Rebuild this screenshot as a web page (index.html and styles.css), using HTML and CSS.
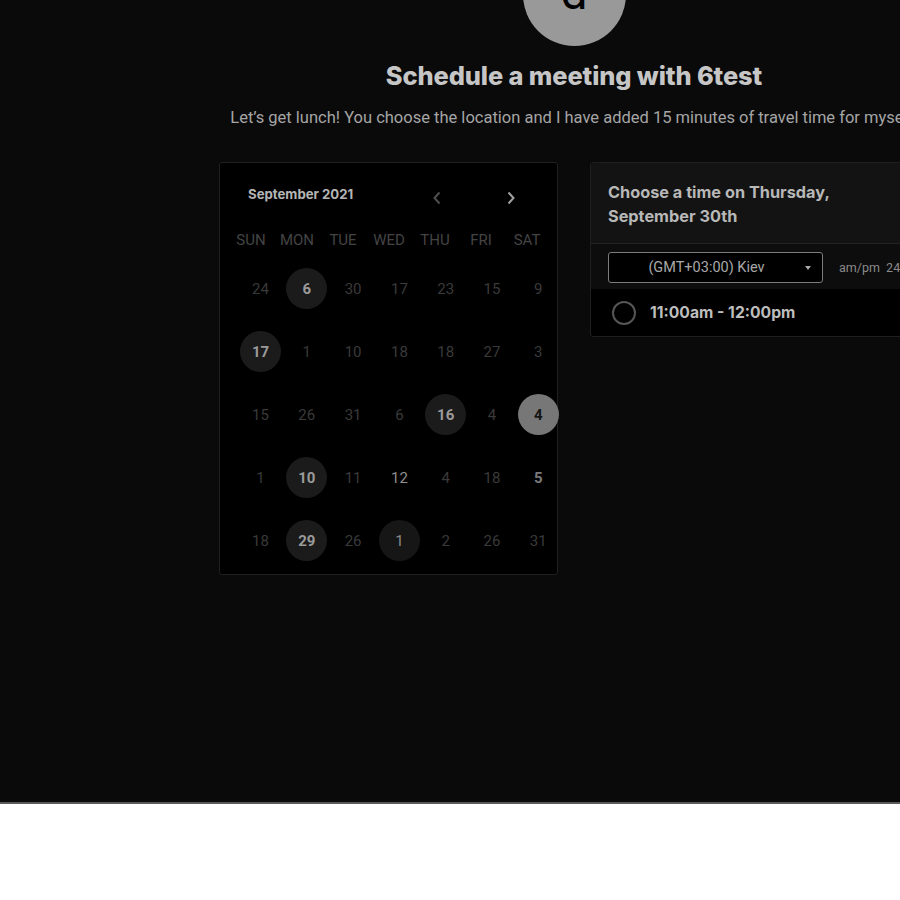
FILE: index.html
```html
<!DOCTYPE html>
<html lang="en">
<head>
<meta charset="utf-8">
<title>Schedule a meeting</title>
<link rel="stylesheet" href="styles.css">
</head>
<body>
<div class="overlay">
  <div class="page">
    <div class="avatar"><span>d</span></div>
    <h1 class="title">Schedule a meeting with 6test</h1>
    <p class="subtitle">Let’s get lunch! You choose the location and I have added 15 minutes of travel time for myself.</p>
    <div class="cards">
      <div class="calendar">
        <div class="cal-head">
          <span class="month">September 2021</span>
          <span class="nav prev"><svg width="10" height="14" viewBox="0 0 10 14"><path d="M7.5 1.5 L2.5 7 L7.5 12.5" fill="none" stroke="currentColor" stroke-width="2"/></svg></span>
          <span class="nav next"><svg width="10" height="14" viewBox="0 0 10 14"><path d="M2.5 1.5 L7.5 7 L2.5 12.5" fill="none" stroke="currentColor" stroke-width="2"/></svg></span>
        </div>
        <div class="weekdays">
          <span>SUN</span><span>MON</span><span>TUE</span><span>WED</span><span>THU</span><span>FRI</span><span>SAT</span>
        </div>
        <div class="days">
          <span class="d">24</span><span class="d av">6</span><span class="d">30</span><span class="d">17</span><span class="d">23</span><span class="d">15</span><span class="d">9</span>
          <span class="d av">17</span><span class="d">1</span><span class="d">10</span><span class="d">18</span><span class="d">18</span><span class="d">27</span><span class="d">3</span>
          <span class="d">15</span><span class="d">26</span><span class="d">31</span><span class="d">6</span><span class="d av">16</span><span class="d">4</span><span class="d sel">4</span>
          <span class="d">1</span><span class="d av">10</span><span class="d">11</span><span class="d lit">12</span><span class="d">4</span><span class="d">18</span><span class="d lit b">5</span>
          <span class="d">18</span><span class="d av">29</span><span class="d">26</span><span class="d av dim">1</span><span class="d">2</span><span class="d">26</span><span class="d">31</span>
        </div>
      </div>
      <div class="times">
        <div class="times-head">Choose a time on Thursday,<br>September 30th</div>
        <div class="tz-row">
          <div class="tz-select"><span>(GMT+03:00) Kiev</span><span class="caret"></span></div>
          <span class="fmt">am/pm&nbsp; 24h</span>
        </div>
        <div class="slot">
          <span class="radio"></span>
          <span class="slot-text">11:00am - 12:00pm</span>
        </div>
      </div>
    </div>
  </div>
</div>
</body>
</html>
```
FILE: styles.css
```css
html, body {
  margin: 0;
  padding: 0;
  background: #ffffff;
  overflow: hidden;
}
.overlay {
  height: 802px;
  background: #0a0a0a;
  border-bottom: 2px solid #5a5a5a;
  overflow: hidden;
}
.page {
  width: 1148px;
  display: flex;
  flex-direction: column;
  align-items: center;
}
.avatar {
  width: 103px;
  height: 103px;
  border-radius: 50%;
  background: #999999;
  margin-top: -57px;
  display: flex;
  align-items: center;
  justify-content: center;
}
.avatar span {
  font-family: Roboto, sans-serif;
  font-size: 48px;
  color: #000;
  line-height: 1;
  margin-top: -4px;
}
.title {
  margin: 15px 0 0;
  font-family: Inter, sans-serif;
  font-weight: 800;
  font-size: 25.4px;
  line-height: 30px;
  color: #c6c6c6;
  letter-spacing: -0.1px;
}
.subtitle {
  margin: 16px 0 0;
  font-family: Roboto, sans-serif;
  font-size: 16.5px;
  line-height: 22px;
  color: #a5a5a5;
  white-space: nowrap;
}
.cards {
  display: flex;
  gap: 32px;
  margin-top: 33px;
  align-items: flex-start;
}
.calendar {
  width: 337px;
  height: 411px;
  background: #000;
  border: 1px solid #1f1f1f;
  border-radius: 3px;
}
.cal-head {
  height: 62px;
  display: flex;
  align-items: center;
  padding-left: 28px;
}
.month {
  font-family: Inter, sans-serif;
  font-weight: 700;
  font-size: 13.2px;
  color: #b5b5b5;
  width: 184px;
}
.nav {
  display: flex;
  margin-top: 7px;
}
.prev { color: #4e4e4e; }
.next { color: #a0a0a0; margin-left: 64px; }
.weekdays {
  display: grid;
  grid-template-columns: repeat(7, 46px);
  padding-left: 8px;
  height: 30px;
  align-items: center;
  font-family: Roboto, sans-serif;
  font-size: 15px;
  color: #444;
  text-align: center;
}
.days {
  display: grid;
  grid-template-columns: repeat(7, 46.3px);
  grid-auto-rows: 63px;
  padding-left: 18px;
  margin-top: 2px;
  font-family: Roboto, sans-serif;
  font-size: 15px;
  color: #3a3a3a;
}
.d {
  display: flex;
  align-items: center;
  justify-content: center;
  width: 41px;
  height: 41px;
  margin: 11px 0 0 2px;
  border-radius: 50%;
}
.av {
  background: #1b1b1b;
  color: #9a9a9a;
  font-weight: 700;
}
.av.dim {
  background: #161616;
  color: #8a8a8a;
  font-weight: 400;
}
.sel {
  background: #777;
  color: #151515;
  font-weight: 700;
}
.lit { color: #8e8e8e; }
.lit.b { color: #7a7a7a; font-weight: 700; }
.times {
  width: 337px;
  border: 1px solid #1f1f1f;
  border-radius: 3px;
  background: #000;
  overflow: hidden;
}
.times-head {
  background: #131313;
  padding: 17px 17px 15px;
  font-family: Inter, sans-serif;
  font-weight: 700;
  font-size: 16.3px;
  line-height: 24px;
  color: #b8b8b8;
  border-bottom: 1px solid #222;
}
.tz-row {
  background: #0d0d0d;
  display: flex;
  align-items: center;
  padding: 8px 17px 6px;
  gap: 16px;
}
.tz-select {
  width: 213px;
  height: 29px;
  border: 1px solid #7c7c7c;
  border-radius: 3px;
  background: #000;
  display: flex;
  align-items: center;
  justify-content: center;
  position: relative;
  font-family: Roboto, sans-serif;
  font-size: 14.5px;
  color: #a8a8a8;
}
.tz-select span:first-child { margin-left: -18px; }
.caret {
  position: absolute;
  right: 11px;
  top: 13px;
  border-left: 3.5px solid transparent;
  border-right: 3.5px solid transparent;
  border-top: 4px solid #a8a8a8;
}
.fmt {
  font-family: Roboto, sans-serif;
  font-size: 12.5px;
  color: #8a8a8a;
}
.slot {
  height: 47px;
  display: flex;
  align-items: center;
  padding-left: 21px;
  gap: 14px;
}
.radio {
  border: 2px solid #555;
  border-radius: 50%;
  box-sizing: border-box;
  width: 24px;
  height: 24px;
}
.slot-text {
  font-family: Inter, sans-serif;
  font-weight: 700;
  font-size: 15.7px;
  color: #bdbdbd;
}
```
